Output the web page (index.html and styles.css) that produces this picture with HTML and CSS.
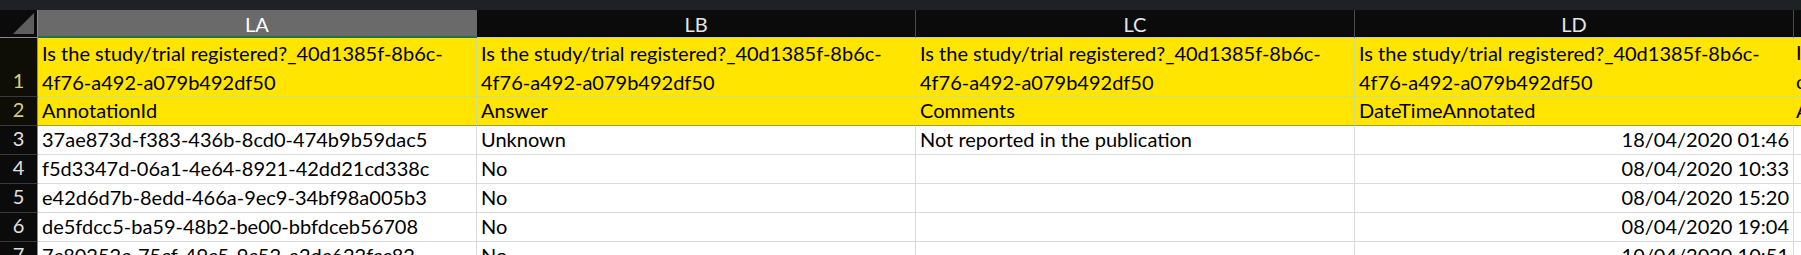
FILE: index.html
```html
<!DOCTYPE html>
<html>
<head>
<meta charset="utf-8">
<link rel="stylesheet" href="styles.css">
</head>
<body>
<div class="topbar"></div>
<div class="sheet">
  <div class="corner"><span class="tri"></span></div>
  <div class="colhead sel">LA</div>
  <div class="colhead">LB</div>
  <div class="colhead">LC</div>
  <div class="colhead">LD</div>
  <div class="colhead last"></div>

  <div class="rowhead hl">1</div>
  <div class="cell y wrap">Is the study/trial registered?_40d1385f-8b6c-<br>4f76-a492-a079b492df50</div>
  <div class="cell y wrap">Is the study/trial registered?_40d1385f-8b6c-<br>4f76-a492-a079b492df50</div>
  <div class="cell y wrap">Is the study/trial registered?_40d1385f-8b6c-<br>4f76-a492-a079b492df50</div>
  <div class="cell y wrap">Is the study/trial registered?_40d1385f-8b6c-<br>4f76-a492-a079b492df50</div>
  <div class="cell y wrap edge">I<br>c</div>

  <div class="rowhead hl last-y">2</div>
  <div class="cell y last-y">AnnotationId</div>
  <div class="cell y last-y">Answer</div>
  <div class="cell y last-y">Comments</div>
  <div class="cell y last-y">DateTimeAnnotated</div>
  <div class="cell y last-y edge">A</div>

  <div class="rowhead">3</div>
  <div class="cell">37ae873d-f383-436b-8cd0-474b9b59dac5</div>
  <div class="cell">Unknown</div>
  <div class="cell">Not reported in the publication</div>
  <div class="cell num">18/04/2020 01:46</div>
  <div class="cell edge"></div>

  <div class="rowhead">4</div>
  <div class="cell">f5d3347d-06a1-4e64-8921-42dd21cd338c</div>
  <div class="cell">No</div>
  <div class="cell"></div>
  <div class="cell num">08/04/2020 10:33</div>
  <div class="cell edge"></div>

  <div class="rowhead">5</div>
  <div class="cell">e42d6d7b-8edd-466a-9ec9-34bf98a005b3</div>
  <div class="cell">No</div>
  <div class="cell"></div>
  <div class="cell num">08/04/2020 15:20</div>
  <div class="cell edge"></div>

  <div class="rowhead">6</div>
  <div class="cell">de5fdcc5-ba59-48b2-be00-bbfdceb56708</div>
  <div class="cell">No</div>
  <div class="cell"></div>
  <div class="cell num">08/04/2020 19:04</div>
  <div class="cell edge"></div>

  <div class="rowhead">7</div>
  <div class="cell">7c80252c-75cf-49c5-9c52-e2dc622fcc82</div>
  <div class="cell">No</div>
  <div class="cell"></div>
  <div class="cell num">10/04/2020 10:51</div>
  <div class="cell edge"></div>
</div>
</body>
</html>
```

FILE: styles.css
```css
html, body {
  margin: 0;
  padding: 0;
  width: 1801px;
  height: 255px;
  overflow: hidden;
  background: #ffffff;
}

.topbar {
  height: 10px;
  background: #1f2225;
}

.sheet {
  display: grid;
  grid-template-columns: 38px repeat(4, 439px) 10px;
  grid-template-rows: 28px 59px 29px repeat(5, 29px);
  font-family: Lato, "Liberation Sans", sans-serif;
  font-size: 20px;
  color: #000;
}

.corner {
  background: #0b0b0b;
  border-right: 1px solid #8a8a8a;
  border-bottom: 1px solid #8a8a8a;
  box-sizing: border-box;
  position: relative;
}

.tri {
  position: absolute;
  right: 3px;
  bottom: 3px;
  width: 0;
  height: 0;
  border-left: 21px solid transparent;
  border-bottom: 21px solid #5e5e5e;
}

.colhead {
  background: #0b0b0b;
  color: #e6e6e6;
  box-sizing: border-box;
  border-right: 1px solid #4a4a4a;
  border-bottom: 1px solid #c8c8c8;
  display: flex;
  align-items: center;
  justify-content: center;
  padding-top: 1px;
}

.colhead.sel {
  background: #6a6a6a;
  color: #ffffff;
  border-right-color: #6a6a6a;
  border-bottom: 2px solid #217346;
}

.colhead.last {
  border-right: none;
}

.rowhead {
  background: #0b0b0b;
  color: #e0e0e0;
  box-sizing: border-box;
  border-right: 1px solid #8a8a8a;
  border-bottom: 1px solid #3a3a3a;
  display: flex;
  align-items: flex-end;
  justify-content: center;
  line-height: 29px;
  padding-bottom: 1px;
}

.rowhead.hl {
  background: #0e0e06;
  color: #d6d07a;
}

.cell {
  box-sizing: border-box;
  border-right: 1px solid #dadada;
  border-bottom: 1px solid #dadada;
  padding: 0 4px;
  line-height: 29px;
  display: flex;
  align-items: flex-end;
  white-space: nowrap;
  overflow: hidden;
}

.cell.wrap {
  display: block;
  line-height: 29px;
  padding-top: 1px;
}

.cell.y {
  background: #ffe500;
  border-right-color: #cfdc8a;
  border-bottom-color: #cfdc8a;
}

.cell.last-y {
  border-bottom-color: #a49a3a;
}

.rowhead.last-y {
  border-bottom-color: #3a3a3a;
}

.cell.num {
  justify-content: flex-end;
}

.cell.edge {
  padding: 0 0 0 2px;
  border-right: none;
}
```
